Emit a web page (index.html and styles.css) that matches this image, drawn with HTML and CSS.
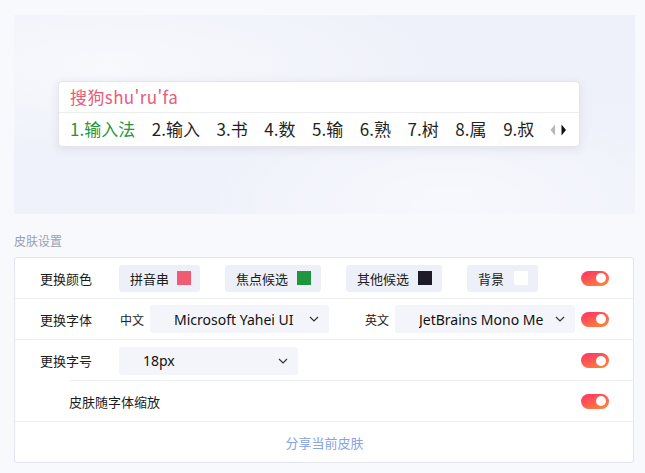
FILE: index.html
```html
<!DOCTYPE html>
<html lang="zh">
<head>
<meta charset="utf-8">
<link rel="stylesheet" href="styles.css">
</head>
<body>
<div class="page">
  <div class="preview">
    <div class="ime">
      <div class="ime-input">搜狗shu'ru'fa</div>
      <div class="ime-cands">
        <span class="cand focus">1.输入法</span>
        <span class="cand">2.输入</span>
        <span class="cand">3.书</span>
        <span class="cand">4.数</span>
        <span class="cand">5.输</span>
        <span class="cand">6.熟</span>
        <span class="cand">7.树</span>
        <span class="cand">8.属</span>
        <span class="cand">9.叔</span>
        <span class="arrows">
          <svg width="17" height="12" viewBox="0 0 17 12"><path d="M5 0.5 L0.5 6 L5 11.5 Z" fill="#b8b8bc"/><path d="M11.5 0.5 L16 6 L11.5 11.5 Z" fill="#111"/></svg>
        </span>
      </div>
    </div>
  </div>

  <div class="section-title">皮肤设置</div>

  <div class="card">
    <div class="row">
      <div class="label">更换颜色</div>
      <div class="content chips">
        <div class="chip">拼音串<span class="swatch sw-pink"></span></div>
        <div class="chip">焦点候选<span class="swatch sw-green"></span></div>
        <div class="chip">其他候选<span class="swatch sw-dark"></span></div>
        <div class="chip">背景<span class="swatch sw-white"></span></div>
      </div>
      <div class="toggle"><span class="knob"></span></div>
    </div>

    <div class="row">
      <div class="label">更换字体</div>
      <div class="content fonts">
        <span class="sub">中文</span>
        <div class="select w179"><span class="sel-text">Microsoft Yahei UI</span><svg class="chev" width="10" height="6" viewBox="0 0 10 6"><path d="M1 1 L5 5 L9 1" fill="none" stroke="#333" stroke-width="1.2"/></svg></div>
        <span class="sub sub-en">英文</span>
        <div class="select w180"><span class="sel-text">JetBrains Mono Medium</span><svg class="chev" width="10" height="6" viewBox="0 0 10 6"><path d="M1 1 L5 5 L9 1" fill="none" stroke="#333" stroke-width="1.2"/></svg></div>
      </div>
      <div class="toggle"><span class="knob"></span></div>
    </div>

    <div class="row row-indent-border">
      <div class="label">更换字号</div>
      <div class="content">
        <div class="select w179"><span class="sel-text">18px</span><svg class="chev" width="10" height="6" viewBox="0 0 10 6"><path d="M1 1 L5 5 L9 1" fill="none" stroke="#333" stroke-width="1.2"/></svg></div>
      </div>
      <div class="toggle"><span class="knob"></span></div>
    </div>

    <div class="row">
      <div class="label label-indent">皮肤随字体缩放</div>
      <div class="content"></div>
      <div class="toggle"><span class="knob"></span></div>
    </div>

    <div class="row share-row">
      <span class="share">分享当前皮肤</span>
    </div>
  </div>
</div>
</body>
</html>
```

FILE: styles.css
```css
* { box-sizing: border-box; }
html, body { margin: 0; padding: 0; }
body {
  background: #f8f9fc;
  font-family: "Noto Sans CJK SC", "Noto Sans", sans-serif;
  color: #222;
  width: 645px;
  height: 473px;
  overflow: hidden;
}
.page {
  padding: 15px 10px 0 14px;
}
.preview {
  width: 621px;
  height: 199px;
  background:
    radial-gradient(ellipse at 15% 25%, rgba(255,255,255,0.55), rgba(255,255,255,0) 45%),
    radial-gradient(ellipse at 70% 95%, rgba(255,255,255,0.5), rgba(255,255,255,0) 40%),
    linear-gradient(180deg, #eff1fa 0%, #f0f2fb 100%);
  display: flex;
  align-items: flex-start;
  padding: 66px 0 0 44px;
}
.ime {
  width: 522px;
  height: 66px;
  background: #fff;
  border: 1px solid #e4e6ec;
  border-radius: 4px;
  box-shadow: 0 2px 10px rgba(40,50,90,0.10);
  display: flex;
  flex-direction: column;
}
.ime-input {
  height: 31px;
  padding: 3px 0 0 11px;
  color: #ec5a78;
  font-size: 17px;
  line-height: 23px;
  letter-spacing: 0.4px;
  border-bottom: 1px solid #ebedf0;
}
.ime-cands {
  flex: 1;
  display: flex;
  align-items: center;
  gap: 16.6px;
  padding: 0 0 1px 11px;
  font-size: 17px;
  line-height: 22px;
  color: #1f1f24;
}
.cand { letter-spacing: 0; }
.cand.focus { color: #23963f; }
.arrows { display: flex; align-items: center; margin-left: -1px; padding-top: 1px; }

.section-title {
  margin: 18px 0 0 0;
  height: 25px;
  font-size: 12px;
  line-height: 18px;
  color: #9aa0ae;
}
.card {
  width: 620px;
  background: #fff;
  border: 1px solid #e3e6ee;
  border-radius: 3px;
}
.row {
  height: 41px;
  display: flex;
  align-items: center;
  padding: 0 24px 0 25px;
  border-bottom: 1px solid #eef0f4;
  position: relative;
}
.row:last-child { border-bottom: none; height: 40px; }
.row-indent-border { border-bottom: none; }
.row-indent-border::after {
  content: "";
  position: absolute;
  left: 54px;
  right: 0;
  bottom: 0;
  height: 1px;
  background: #eef0f4;
}
.label {
  width: 79px;
  flex: none;
  font-size: 13px;
  color: #1c1c1c;
}
.label-indent { width: auto; margin-left: 29px; }
.content {
  flex: 1;
  display: flex;
  align-items: center;
}
.chips { gap: 25px; }
.chip {
  height: 27px;
  display: flex;
  align-items: center;
  gap: 8px;
  padding: 0 9px 0 11px;
  background: #edf0f9;
  border-radius: 3px;
  font-size: 13px;
  color: #1c1c1c;
}
.chip:nth-child(2), .chip:nth-child(3), .chip:nth-child(4) { padding: 0 10px 0 11px; gap: 9px; }
.chip:nth-child(4) { gap: 10px; }
.swatch { width: 14px; height: 14px; display: inline-block; }
.sw-pink { background: #f05a72; }
.sw-green { background: #1e9640; }
.sw-dark { background: #1e1a2a; }
.sw-white { background: #fff; }

.sub { font-size: 12px; color: #222; width: 30px; flex: none; margin-left: 1px; }
.sub-en { margin-left: 36px; }
.select {
  height: 28px;
  background: #f4f5fa;
  border-radius: 3px;
  display: flex;
  align-items: center;
  padding: 0 10px 0 24px;
  font-family: "Noto Sans", "Open Sans", sans-serif;
  font-size: 14px;
  color: #111;
}
.w179 { width: 179px; }
.w180 { width: 180px; }
.sel-text {
  flex: 1;
  white-space: nowrap;
  overflow: hidden;
  margin-right: 12px;
}
.chev { flex: none; }

.toggle {
  flex: none;
  width: 28px;
  height: 15px;
  border-radius: 8px;
  background: linear-gradient(160deg, #ff2f6a 0%, #ff8c34 100%);
  display: flex;
  align-items: center;
  justify-content: flex-end;
  padding-right: 3px;
}
.knob {
  width: 10px;
  height: 10px;
  border-radius: 50%;
  background: #fff;
}
.share-row { justify-content: center; padding: 0; }
.share {
  font-size: 13px;
  color: #86a3e6;
  margin-left: 1px;
}
```
